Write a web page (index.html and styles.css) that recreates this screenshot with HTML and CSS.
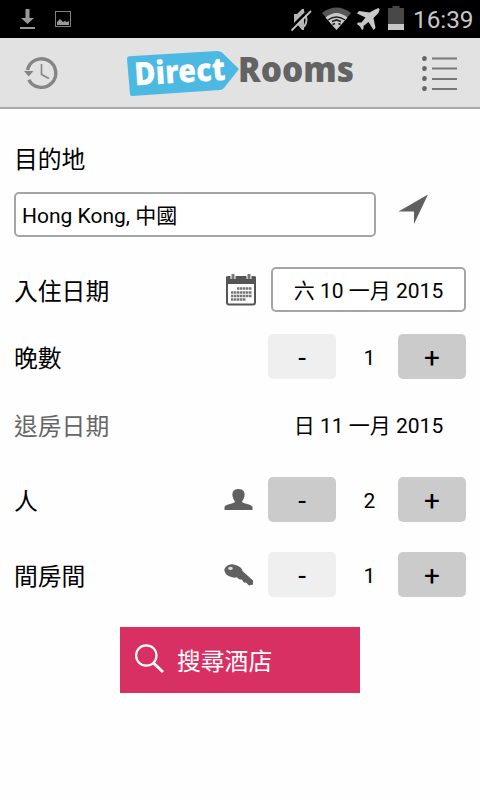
FILE: index.html
```html
<!DOCTYPE html>
<html lang="zh-Hant">
<head>
    <meta charset="UTF-8">
    <meta name="viewport" content="width=device-width, initial-scale=1.0">
    <title>DirectRooms</title>
    <link rel="stylesheet" href="styles.css">
</head>
<body>
    <div class="status-bar">
        <svg class="status-left" width="80" height="38" viewBox="0 0 80 38">
            <path d="M25.500 9h4v9h4.500l-6.500 6-6.500-6h4.500z" fill="#999"/>
            <path d="M20 27h15v2H20z" fill="#999"/>
            <rect x="55.500" y="11.500" width="15" height="15" fill="none" stroke="#808080"/>
            <path d="M57 25v-3l3-3 3 3 2-1 2 1 2-1v4z" fill="#999"/>
        </svg>
        <svg class="status-icons" width="120" height="38" viewBox="288 0 120 38">
            <path d="M294 14h3l5-5h2v21h-2l-5-6h-3z" fill="#b5b5b5"/>
            <path d="M304 12q5 8 0 15" fill="none" stroke="#b5b5b5" stroke-width="2"/>
            <path d="M290 29L309 10" stroke="#000" stroke-width="3"/>
            <path d="M291.500 30.500L311 11" stroke="#c4c4c4" stroke-width="1.800"/>
            <path d="M322 13q14.500-11 29 0L336.500 30z" fill="#555"/>
            <path d="M325.500 17.500q11-9 22 0L336.500 30z" fill="#c8c8c8"/>
            <path d="M328 20q8.500-6 17 0" fill="none" stroke="#222" stroke-width="1.500"/>
            <path d="M332 21.500l4.500-1.500 4.500 1.500M332.500 24.500l2.500-1M338.500 23.500l2 1" fill="none" stroke="#222" stroke-width="1.800"/>
            <path d="M376 9l3-1 .500 2-1 3-5 5 2 10-2 2-5-8-5 4v3l-1.500 1-2-3.500-3-2.500 1-1.500h3.500l4-5-8.500-4 2-2.500 10.500 1.500z" fill="#c8c8c8"/>
            <path d="M388 8h4.500V6h7v2h4.500v16h-16z" fill="#484848"/>
            <path d="M388 24h16v6h-16z" fill="#c8c8c8"/>
        </svg>
        <span class="clock">16:39</span>
    </div>

    <header class="header">
        <svg width="36" height="36" viewBox="23 55 36 36">
            <path d="M27.500 70A14.300 14.300 0 1 1 28.800 79.700" fill="none" stroke="#858585" stroke-width="3.400"/>
            <path d="M24 71h9.500l-4.800 5.500z" fill="#858585"/>
            <path d="M41.500 64v10.500l7.500 4" fill="none" stroke="#858585" stroke-width="1.600"/>
        </svg>
        <svg class="logo" width="236" height="68" viewBox="122 39 236 68">
            <path d="M129 56.300L217 51q3 0 5 1.500L239 69 224 88q-2 2-4 2l-88 6q-2 0-2-2l-3-35q0-2.500 2-2.700z" fill="#4bb9e2"/>
            <text class="logo-direct" x="135" y="85.500" textLength="91" lengthAdjust="spacingAndGlyphs" transform="rotate(-3.500 135 85.500)">Direct</text>
            <text class="logo-rooms" x="238" y="81.500" textLength="116" lengthAdjust="spacingAndGlyphs">Rooms</text>
        </svg>
        <svg width="38" height="38" viewBox="421 54 38 38">
            <g fill="#666">
                <ellipse cx="424.500" cy="58.500" rx="2.300" ry="2.600"/>
                <ellipse cx="424.500" cy="68.500" rx="2.300" ry="2.600"/>
                <ellipse cx="424.500" cy="78.500" rx="2.300" ry="2.600"/>
                <ellipse cx="424.500" cy="88.500" rx="2.300" ry="2.600"/>
            </g>
            <path d="M432 58.500h25M432 68.500h25M432 79h25M432 89h25" stroke="#777" stroke-width="2.200"/>
        </svg>
    </header>

    <main class="search-form">
        <label class="label" for="destination">目的地</label>
        <div class="destination-row">
            <input class="field" type="text" id="destination" value="Hong Kong, 中國">
            <svg class="locate" width="32" height="32" viewBox="398 194 32 32">
                <path d="M428 194.500L414 224V211.500H398.500z" fill="#606060"/>
            </svg>
        </div>

        <div class="row checkin-row">
            <span class="label">入住日期</span>
            <svg class="row-icon calendar" width="32" height="34" viewBox="225 272 32 34">
                <rect x="227" y="276" width="28" height="27.500" rx="2" fill="#fff" stroke="#555" stroke-width="2"/>
                <path d="M226 275.500h30v7.500h-30z" fill="#555"/>
                <path d="M233 273v5M249 273v5" stroke="#fff" stroke-width="5"/>
                <path d="M233 273v5M249 273v5" stroke="#777" stroke-width="3"/>
                <path d="M237 287.500h15M231 291.500h21M231 295h21M231 298.500h15" stroke="#777" stroke-width="2.300" stroke-dasharray="2.500 .5"/>
            </svg>
            <button class="date-button" type="button">六 10 一月 2015</button>
        </div>

        <div class="row nights-row">
            <span class="label">晚數</span>
            <div class="stepper">
                <button class="step disabled" type="button">-</button>
                <span class="count">1</span>
                <button class="step" type="button">+</button>
            </div>
        </div>

        <div class="row checkout-row">
            <span class="label muted">退房日期</span>
            <span class="date-text">日 11 一月 2015</span>
        </div>

        <div class="row guests-row">
            <span class="label">人</span>
            <svg class="row-icon" width="30" height="24" viewBox="224 488 30 24">
                <path d="M238.500 489c5 0 6.500 3 6 7-.5 3-2 4-2.500 6 2 2 10.500 2 10.500 5.500v2.500h-28v-2.500c0-3.500 8.500-3.500 10.500-5.500-.5-2-2-3-2.500-6-.5-4 1-7 6-7z" fill="#606060"/>
            </svg>
            <div class="stepper">
                <button class="step" type="button">-</button>
                <span class="count">2</span>
                <button class="step" type="button">+</button>
            </div>
        </div>

        <div class="row rooms-row">
            <span class="label">間房間</span>
            <svg class="row-icon" width="30" height="24" viewBox="224 563 30 24">
                <ellipse cx="233.500" cy="571" rx="9.200" ry="6.500" transform="rotate(12 233.500 571)" fill="#606060"/>
                <path d="M238 570l5 1.500 10 9v4l-4 1-3-3-2 .2-2-3-3-.5-3-3z" fill="#606060"/>
                <ellipse cx="230.500" cy="568.300" rx="2.400" ry="1.600" fill="#ddd"/>
            </svg>
            <div class="stepper">
                <button class="step disabled" type="button">-</button>
                <span class="count">1</span>
                <button class="step" type="button">+</button>
            </div>
        </div>

        <button class="search-button" type="submit">
            <svg width="30" height="30" viewBox="134 644 30 30">
                <circle cx="146.300" cy="655.500" r="10.200" fill="none" stroke="#fff" stroke-width="2.200"/>
                <path d="M153.500 663l9.500 9" stroke="#fff" stroke-width="2.800"/>
            </svg>
            <span>搜尋酒店</span>
        </button>
    </main>
</body>
</html>
```
FILE: styles.css
```css
* {
    box-sizing: border-box;
}

body {
    margin: 0;
    width: 480px;
    height: 800px;
    overflow: hidden;
    background: #fefefe;
    color: #000;
    font-family: Roboto, 'Noto Sans CJK TC', sans-serif;
}

svg {
    display: block;
    flex-shrink: 0;
}

.status-bar {
    display: flex;
    align-items: center;
    height: 38px;
    padding-right: 9px;
    background: #000;
}

.status-icons {
    margin-left: auto;
}

.clock {
    width: 58px;
    margin-left: 5px;
    padding-top: 2px;
    color: #c8c8c8;
    font-size: 24.300px;
    line-height: 38px;
    text-align: right;
    white-space: nowrap;
}

.header {
    display: flex;
    align-items: center;
    justify-content: space-between;
    height: 71px;
    padding: 0 21px 0 23px;
    background: #e2e2e2;
    border-bottom: 2px solid #aaa;
}

.logo {
    overflow: visible;
}

.logo-direct,
.logo-rooms {
    font-family: 'Noto Sans', sans-serif;
    font-weight: 900;
}

.logo-direct {
    font-size: 32px;
    fill: #fff;
}

.logo-rooms {
    font-size: 36px;
    fill: #636363;
}

.search-form {
    display: flex;
    flex-direction: column;
    padding: 34px 14px 0;
}

.label {
    font-size: 23.800px;
    line-height: 34px;
}

.muted {
    color: #666;
}

.destination-row {
    display: flex;
    margin-top: 15px;
}

.field,
.date-button {
    height: 45px;
    border: 2px solid #a5a5a5;
    border-radius: 5px;
    background: #fff;
    color: #000;
    font-family: inherit;
}

.field {
    width: 362px;
    padding: 0 6px 1px;
    font-size: 21px;
}

.locate {
    margin: 2px 0 0 22px;
}

.row {
    display: flex;
    align-items: center;
    height: 45px;
}

.row .label {
    margin-right: auto;
    padding-top: 5px;
}

.checkin-row {
    margin-top: 30px;
}

.nights-row {
    margin-top: 22px;
}

.checkout-row {
    margin-top: 23px;
}

.guests-row {
    margin-top: 30px;
}

.rooms-row {
    margin-top: 30px;
}

.row-icon {
    margin-right: 14px;
}

.date-button,
.date-text {
    width: 195px;
    padding: 0 0 2px;
    font-size: 21px;
    text-align: center;
}

.stepper {
    display: flex;
    align-items: center;
    width: 198px;
}

.step {
    width: 68px;
    height: 45px;
    padding: 2px 0 0;
    border: none;
    border-radius: 5px;
    background: #cbcbcb;
    color: #000;
    font-family: inherit;
    font-size: 28px;
}

.disabled {
    background: #efefef;
}

.count {
    flex: 1;
    padding: 3px 0 0 5px;
    font-size: 21px;
    text-align: center;
}

.search-button {
    display: flex;
    align-items: center;
    align-self: center;
    gap: 13px;
    width: 240px;
    height: 66px;
    margin-top: 30px;
    padding: 0 14px 2px;
    border: none;
    background: #d93063;
    color: #fff;
    font-family: inherit;
    font-size: 23.800px;
}
```
